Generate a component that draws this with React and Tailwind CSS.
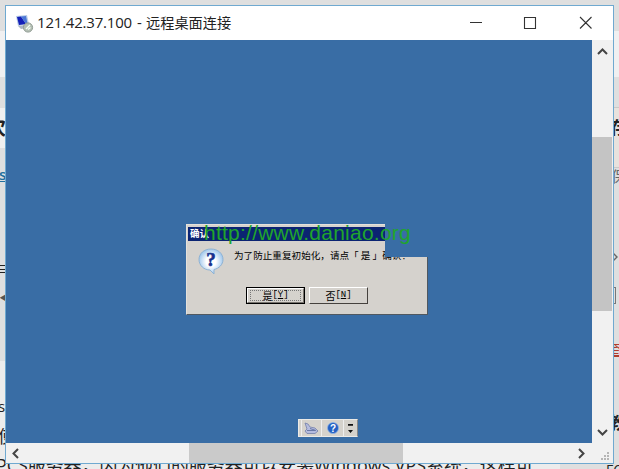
import React from "react";

const UI = "font-['Open_Sans','Noto_Sans_CJK_SC',sans-serif]";

function Chevron({ d }) {
  return (
    <svg width="11" height="11" viewBox="0 0 11 11" fill="none" stroke="#444" strokeWidth="2">
      <path d={d} />
    </svg>
  );
}

function TitleBar() {
  return (
    <div className="flex h-[34px] shrink-0 items-center bg-white">
      <svg className="ml-[9px] shrink-0" width="19" height="19" viewBox="0 0 19 19">
        <path d="M1 2l11-1 2 9-11 2z" fill="#b8cbe6" />
        <path d="M2 3l4-.5 5 7.500-7 1z" fill="#1420b8" />
        <path d="M6 2.500l5-.5 1.500 7.500-1.500.5z" fill="#4d78d6" />
        <path d="M3 12l7-1 2 3-6 1z" fill="#aeb8c4" />
        <circle cx="13" cy="13.500" r="4.600" fill="#b4bfb4" stroke="#929d95" />
        <path d="M11 15l4-4M13 15.500l2.500-2" stroke="#f5fff5" strokeWidth="1.400" />
      </svg>
      <div className="ml-[3px] mt-[-3px] flex items-center whitespace-nowrap leading-5 text-[#222]">
        <span className="w-[100px] font-['Open_Sans'] text-[15px] tracking-[-0.2px]">121.42.37.100</span>
        <span className="w-[9px] font-['Open_Sans'] text-[15px]">-</span>
        <span className="font-['Noto_Sans_CJK_SC'] text-[14.200px]">远程桌面连接</span>
      </div>
      <svg className="ml-auto mr-[21px]" width="122" height="14" viewBox="0 0 122 14" fill="none" stroke="#333" strokeWidth="1.100">
        <path d="M0 6.500h12M54.500 1.500h11v11h-11zM110 1l11.500 11.500M121.500 1L110 12.500" />
      </svg>
    </div>
  );
}

function Dialog() {
  return (
    <div className="absolute left-[180px] top-[184px] h-[91px] w-[242px] font-['Noto_Sans_CJK_SC']">
      <div className="flex h-full w-full flex-col border border-[#e4e1dc] border-b-[#505860] border-r-[#505860] bg-[#d5d2cd] p-px [clip-path:polygon(0_0,199px_0,199px_33px,242px_33px,242px_91px,0_91px)]">
        <div className="mt-px flex h-[14px] items-center bg-[#0b2472] pl-[2px] text-[9.500px] font-bold leading-none text-white">确认</div>
        <div className="flex pl-[9px] pt-[6px]">
          <svg width="28" height="30" viewBox="0 0 28 30">
            <defs>
              <radialGradient id="bubble">
                <stop offset=".4" stopColor="#fff" />
                <stop offset="1" stopColor="#a3c9ed" />
              </radialGradient>
            </defs>
            <path d="M14 2C7 2 2 6.500 2 12.500S7 23 13 23l4 4v-4.500c5-1 9-5 9-10C26 6.500 21 2 14 2z" fill="url(#bubble)" stroke="#8fb3d4" />
            <text x="14" y="19" textAnchor="middle" className="font-['Liberation_Serif'] text-[19px] font-bold" fill="#16318e" stroke="#16318e" strokeWidth=".6">?</text>
          </svg>
          <div className="ml-[9px] mt-px whitespace-pre text-[9.600px] leading-[14px] text-black">为了防止重复初始化，请点「 是 」确认！</div>
        </div>
        <div className="mt-auto mb-[9px] flex gap-[4px] pl-[58px] text-[10px] leading-none">
          <div className="flex h-[17px] w-[59px] items-center justify-center border border-black bg-[#d5d2cd]">
            <div className="flex h-full w-full items-center justify-center border border-b-[#77736e] border-l-white border-r-[#77736e] border-t-white">
              <div className="flex h-[11px] w-[51px] items-center justify-center border border-dotted border-[#777]">是<span className="font-['Liberation_Mono'] text-[9px]">[<u>Y</u>]</span></div>
            </div>
          </div>
          <div className="flex h-[17px] w-[59px] items-center justify-center border border-b-[#45413d] border-l-white border-r-[#45413d] border-t-white">否<span className="font-['Liberation_Mono'] text-[9px]">[<u>N</u>]</span></div>
        </div>
      </div>
      <span className="absolute left-[18px] top-[-4px] whitespace-nowrap font-['Liberation_Sans',sans-serif] text-[21px] leading-[26px] tracking-[0.24px] text-[#20a52c]">http://www.daniao.org</span>
    </div>
  );
}

function LanguageBar() {
  return (
    <div className="absolute left-[292px] top-[379px] flex h-[18px] w-[60px] border border-[#eceae6] border-r-[#888] bg-[#d5d2cc]">
      <div className="ml-[2px] flex w-[21px] items-center justify-center border-l border-r border-[#eee]">
        <svg width="15" height="13" viewBox="0 0 15 13">
          <path d="M1 1l3 1 2 3 5 1 3 3-3 2.500H3L1 9l2-2z" fill="#b5bcdf" stroke="#7580aa" strokeWidth=".8" />
          <path d="M3 8.500h8M6 6.500l6 2" stroke="#6978a6" />
        </svg>
      </div>
      <div className="flex w-[22px] items-center justify-center border-r border-[#eee]">
        <svg width="12" height="12" viewBox="0 0 12 12">
          <circle cx="6" cy="6" r="5.500" fill="#2461c4" stroke="#8db4ea" strokeWidth=".7" />
          <text x="6" y="9.500" textAnchor="middle" className="font-['Liberation_Sans'] text-[10px] font-bold" fill="white">?</text>
        </svg>
      </div>
      <svg width="12" height="16" viewBox="0 0 12 16"><path d="M4 4h5v1.800H4zM4 10h5l-2.500 3z" fill="#111" /></svg>
    </div>
  );
}

function Backdrop() {
  return (
    <div className={`absolute inset-0 overflow-hidden text-[#222] ${UI}`}>
      <div className="absolute left-0 top-[31px] h-[46px] w-full bg-[#f0f0f1]" />
      <div className="absolute left-0 top-[108px] h-[40px] w-full bg-[#f0f0f0]" />
      <div className="absolute left-0 top-[361px] h-[108px] w-[560px] bg-[#ececec]" />
      <div className="absolute left-[607px] top-[107px] h-[61px] w-3 border-y border-[#cbc9c7] bg-[#e8e2dd]" />
      <div className="absolute left-[-14px] top-[113px] text-[20px] font-bold">次</div>
      <div className="absolute left-[-1px] top-[163px] text-[15px] font-semibold text-[#216f9e] underline">s</div>
      <div className="absolute left-[-5px] top-[257px] text-[16px]">≡</div>
      <div className="absolute left-[-1px] top-[290px] text-[11px] text-[#555]">◀</div>
      <div className="absolute left-[-2px] top-[395px] text-[15px]">s</div>
      <div className="absolute left-[-2px] top-[424px] text-[17px]">使</div>
      <div className="absolute left-[-4px] top-[453px] whitespace-nowrap text-[17.900px] leading-6">PCS服务器，因为他们的服务器可以安装Windows VPS系统，这样可</div>
      <div className="absolute left-[610px] top-[115px] text-[17px] font-bold">存</div>
      <div className="absolute left-[611px] top-[165px] text-[15px] text-[#666]">保</div>
      <svg className="absolute left-[612px] top-[251px]" width="6" height="12" viewBox="0 0 6 12" fill="none" stroke="#666" strokeWidth="1.400">
        <path d="M1 2l4 4-4 4" />
      </svg>
      <div className="absolute left-[607px] top-[287px] h-[17px] w-[9px] border border-[#777]" />
      <div className="absolute left-[606px] top-[338px] text-[15px] text-[#b13d2d] underline">奎</div>
      <div className="absolute left-[609px] top-[410px] text-[17px] font-bold">教</div>
      <div className="absolute left-[606px] top-[459px] text-[14px]">FC</div>
    </div>
  );
}

export default function App() {
  return (
    <div className="relative h-[469px] w-[619px] overflow-hidden bg-[#dfdfdf]">
      <Backdrop />
      <div className={`absolute left-[5px] top-[5px] flex h-[459px] w-[609px] flex-col border border-[#6fa9d0] bg-white ${UI}`}>
        <TitleBar />
        <div className="flex h-[403px]">
          <div className="relative w-[586px] bg-[#396da5]">
            <Dialog />
            <LanguageBar />
          </div>
          <div className="flex w-[21px] flex-col items-center justify-between bg-[#f1f1f1] pr-px">
            <div className="flex h-[97px] items-start pt-[6px]"><Chevron d="M1 8l4.500-4.500L10 8" /></div>
            <div className="h-[174px] w-full bg-[#c4c4c4]" />
            <div className="flex h-[132px] items-end pb-[5px]"><Chevron d="M1 3l4.500 4.500L10 3" /></div>
          </div>
        </div>
        <div className="flex h-[20px] items-center bg-[#f1f1f1]">
          <div className="w-[183px] pl-[4px]"><Chevron d="M8 1L3.500 5.500L8 10" /></div>
          <div className="h-full w-[214px] bg-[#cacaca]" />
          <div className="flex w-[189px] justify-end pr-[5px]"><Chevron d="M3 1l4.500 4.500L3 10" /></div>
          <svg width="20" height="20" viewBox="0 0 20 20"><path d="M15 9h2v2h-2zM12 12h2v2h-2zM15 12h2v2h-2zM9 15h2v2H9zM12 15h2v2h-2zM15 15h2v2h-2z" fill="#b5b5b5" /></svg>
        </div>
      </div>
    </div>
  );
}
